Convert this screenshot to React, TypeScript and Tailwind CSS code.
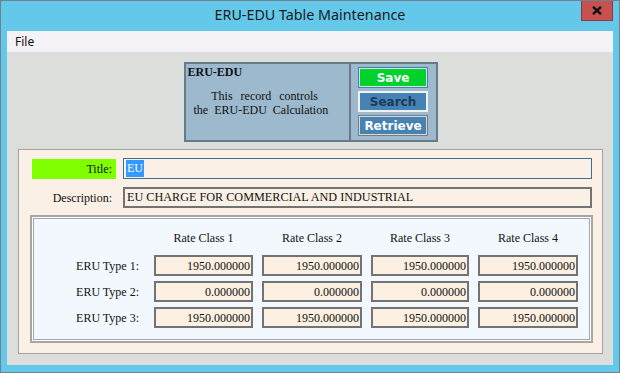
import React from 'react';

const serif = "font-['Liberation_Serif','Times_New_Roman',serif]";

const rows = [
  { label: 'ERU Type 1:', values: ['1950.000000', '1950.000000', '1950.000000', '1950.000000'] },
  { label: 'ERU Type 2:', values: ['0.000000', '0.000000', '0.000000', '0.000000'] },
  { label: 'ERU Type 3:', values: ['1950.000000', '1950.000000', '1950.000000', '1950.000000'] },
];

function ValueBox({ value }: { value: string }) {
  return (
    <div className="h-[21px] border-2 border-[#737373] bg-[#fcf0e2] flex items-center justify-end pr-px text-[12px] text-[#111]">
      {value}
    </div>
  );
}

export default function App() {
  return (
    <div className="w-[620px] h-[373px] bg-[#63c8ea] border border-[#71808c] flex flex-col overflow-hidden">
      {/* title bar */}
      <div className="relative h-[30px] flex items-center justify-center shrink-0">
        <span className="font-['Noto_Sans',sans-serif] text-[14.3px] text-[#1b1b1b] leading-none pb-px">
          ERU-EDU Table Maintenance
        </span>
        <div className="absolute top-[-1px] right-[6px] w-[32px] h-[21px] bg-[#c75050] border border-[#8e3a3a] flex items-center justify-center">
          <svg width="10" height="9" viewBox="0 0 10 9">
            <path d="M1 0.8 L9 8.2 M9 0.8 L1 8.2" stroke="#111" strokeWidth="2.4" />
          </svg>
        </div>
      </div>

      {/* client */}
      <div className="flex-1 flex flex-col ml-[6px] mr-[6px] mb-[7px]">
        <div className="h-[21px] shrink-0 bg-[#f4f2f6] flex items-center pl-[8px] font-['Noto_Sans',sans-serif] text-[12px] text-[#111]">
          File
        </div>

        <div className="flex-1 bg-[#dcdedb] flex flex-col pl-[11px] pr-[10px] pb-[11px]">
          {/* header block */}
          <div className="mt-[10px] self-center flex w-[254px] h-[80px] border-2 border-[#687b88] bg-[#9cb9cd] shrink-0">
            <div className={`w-[165px] border-r-2 border-[#687b88] pl-[2px] pt-px ${serif} text-[12px] leading-[14px] text-[#111]`}>
              <div className="font-bold">ERU-EDU</div>
              <div className="mt-[10px] whitespace-pre [word-spacing:5px]">{'   This record controls'}</div>
              <div className="whitespace-pre [word-spacing:3px]">{' the ERU-EDU Calculation'}</div>
            </div>
            <div className="flex-1 flex flex-col items-center pt-[3px] gap-[3px] font-['DejaVu_Sans',Verdana,sans-serif] font-bold text-[12px]">
              <div className="w-[70px] h-[21px] border border-[#4a80b0] p-px bg-[#d6e0e8]">
                <div className="h-full bg-[#00d22d] text-white flex items-center justify-center">Save</div>
              </div>
              <div className="w-[70px] h-[21px] border-2 border-[#eef2f4] bg-[#4682b4] text-[#1d3a57] flex items-center justify-center">
                Search
              </div>
              <div className="w-[70px] h-[21px] border border-[#7b7b7b] p-px bg-[#d8d8d8]">
                <div className="h-full bg-[#4682b4] text-white flex items-center justify-center">Retrieve</div>
              </div>
            </div>
          </div>

          {/* main form */}
          <div className={`mt-[7px] flex-1 border border-[#a3a3a3] bg-[#faf0e6] flex flex-col pl-[11px] pr-[9px] pt-[8px] pb-[10px] ${serif} text-[12px] text-[#111]`}>
            <div className="flex items-center gap-[7px] ml-[2px] mr-px">
              <div className="w-[84px] h-[20px] bg-[#7fff00] flex items-center justify-end pr-[4px]">Title:</div>
              <div className="flex-1 h-[21px] border border-[#3c6e96] bg-[#faf0e6] flex items-center pl-[2px]">
                <span className="bg-[#3399ff] text-white px-px leading-[17px]">EU</span>
              </div>
            </div>
            <div className="flex items-center gap-[7px] ml-[2px] mr-px mt-[8px]">
              <div className="w-[84px] text-right pr-[4px]">Description:</div>
              <div className="flex-1 h-[21px] border-2 border-[#737373] bg-[#faf0e6] flex items-center pl-[2px] text-[12.2px]">
                EU CHARGE FOR COMMERCIAL AND INDUSTRIAL
              </div>
            </div>

            <div className="mt-[7px] flex-1 border-2 border-[#a6a6a6] p-px bg-white flex">
              <div className="flex-1 border border-[#a6a6a6] bg-[#f2f8fd] pt-[12px]">
                <div className="grid grid-cols-[111px_99px_100px_98px_100px] gap-x-[9px] gap-y-[5px] leading-[14px]">
                  <div />
                  <div className="text-center mb-[5px]">Rate Class 1</div>
                  <div className="text-center mb-[5px]">Rate Class 2</div>
                  <div className="text-center mb-[5px]">Rate Class 3</div>
                  <div className="text-center mb-[5px]">Rate Class 4</div>
                  {rows.map((row) => (
                    <React.Fragment key={row.label}>
                      <div className="h-[21px] flex items-center justify-end pr-[6px]">{row.label}</div>
                      {row.values.map((v, i) => (
                        <ValueBox key={i} value={v} />
                      ))}
                    </React.Fragment>
                  ))}
                </div>
              </div>
            </div>
          </div>
        </div>
      </div>
    </div>
  );
}
